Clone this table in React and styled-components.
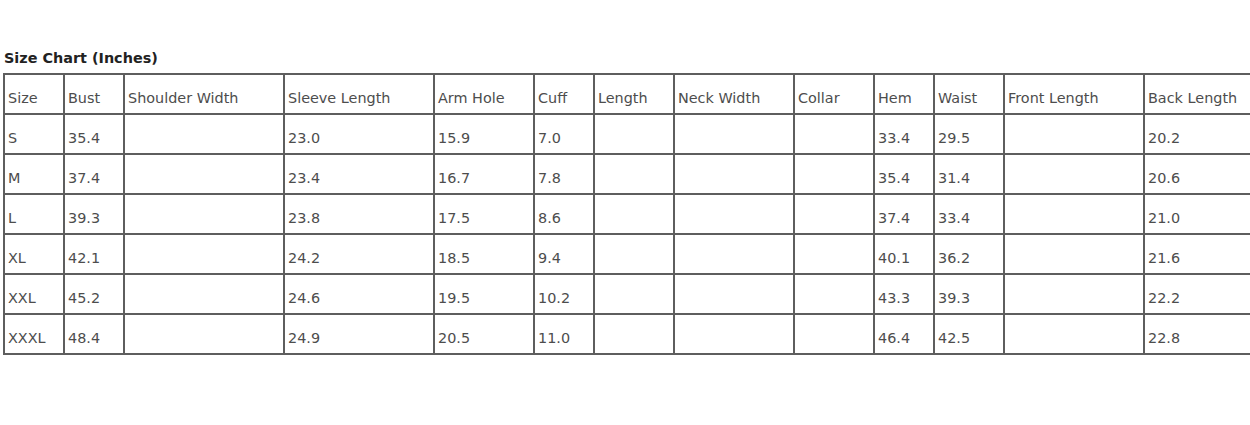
import React from 'react';
import styled, {createGlobalStyle} from 'styled-components';

const GlobalStyle = createGlobalStyle`
  html, body {
    margin: 0;
    padding: 0;
    background: #ffffff;
  }
  body {
    font-family: "DejaVu Sans", Verdana, sans-serif;
  }
`;

const Page = styled.div`
  padding: 48px 0 0 3px;
  width: 100vw;
  box-sizing: border-box;
  overflow: hidden;
`;

const Title = styled.div`
  font-size: 14.4px;
  font-weight: bold;
  color: #222;
  height: 25px;
  line-height: 20px;
  padding-left: 1px;
`;

const Table = styled.table`
  border-collapse: collapse;
  table-layout: fixed;
  width: 1300px;
`;

const Cell = styled.td`
  border: 2px solid #5e5e5e;
  height: 40px;
  padding: 8px 0 0 3px;
  font-size: 14.4px;
  color: #4d4d4d;
  text-align: left;
  vertical-align: middle;
  white-space: nowrap;
  overflow: hidden;
  box-sizing: border-box;
`;

const columns = [
  {name: 'Size', w: 60},
  {name: 'Bust', w: 60},
  {name: 'Shoulder Width', w: 160},
  {name: 'Sleeve Length', w: 150},
  {name: 'Arm Hole', w: 100},
  {name: 'Cuff', w: 60},
  {name: 'Length', w: 80},
  {name: 'Neck Width', w: 120},
  {name: 'Collar', w: 80},
  {name: 'Hem', w: 60},
  {name: 'Waist', w: 70},
  {name: 'Front Length', w: 140},
  {name: 'Back Length', w: 160},
];

const rows = [
  ['S', '35.4', '', '23.0', '15.9', '7.0', '', '', '', '33.4', '29.5', '', '20.2'],
  ['M', '37.4', '', '23.4', '16.7', '7.8', '', '', '', '35.4', '31.4', '', '20.6'],
  ['L', '39.3', '', '23.8', '17.5', '8.6', '', '', '', '37.4', '33.4', '', '21.0'],
  ['XL', '42.1', '', '24.2', '18.5', '9.4', '', '', '', '40.1', '36.2', '', '21.6'],
  ['XXL', '45.2', '', '24.6', '19.5', '10.2', '', '', '', '43.3', '39.3', '', '22.2'],
  ['XXXL', '48.4', '', '24.9', '20.5', '11.0', '', '', '', '46.4', '42.5', '', '22.8'],
];

function App(){
  return (
    <>
      <GlobalStyle />
      <Page>
        <Title>Size Chart (Inches)</Title>
        <Table>
          <colgroup>
            {columns.map(c => <col key={c.name} style={{width: c.w}} />)}
          </colgroup>
          <tbody>
            <tr>
              {columns.map(c => <Cell key={c.name}>{c.name}</Cell>)}
            </tr>
            {rows.map(r => (
              <tr key={r[0]}>
                {r.map((v, i) => <Cell key={i}>{v}</Cell>)}
              </tr>
            ))}
          </tbody>
        </Table>
      </Page>
    </>
  );
}

export default App;
